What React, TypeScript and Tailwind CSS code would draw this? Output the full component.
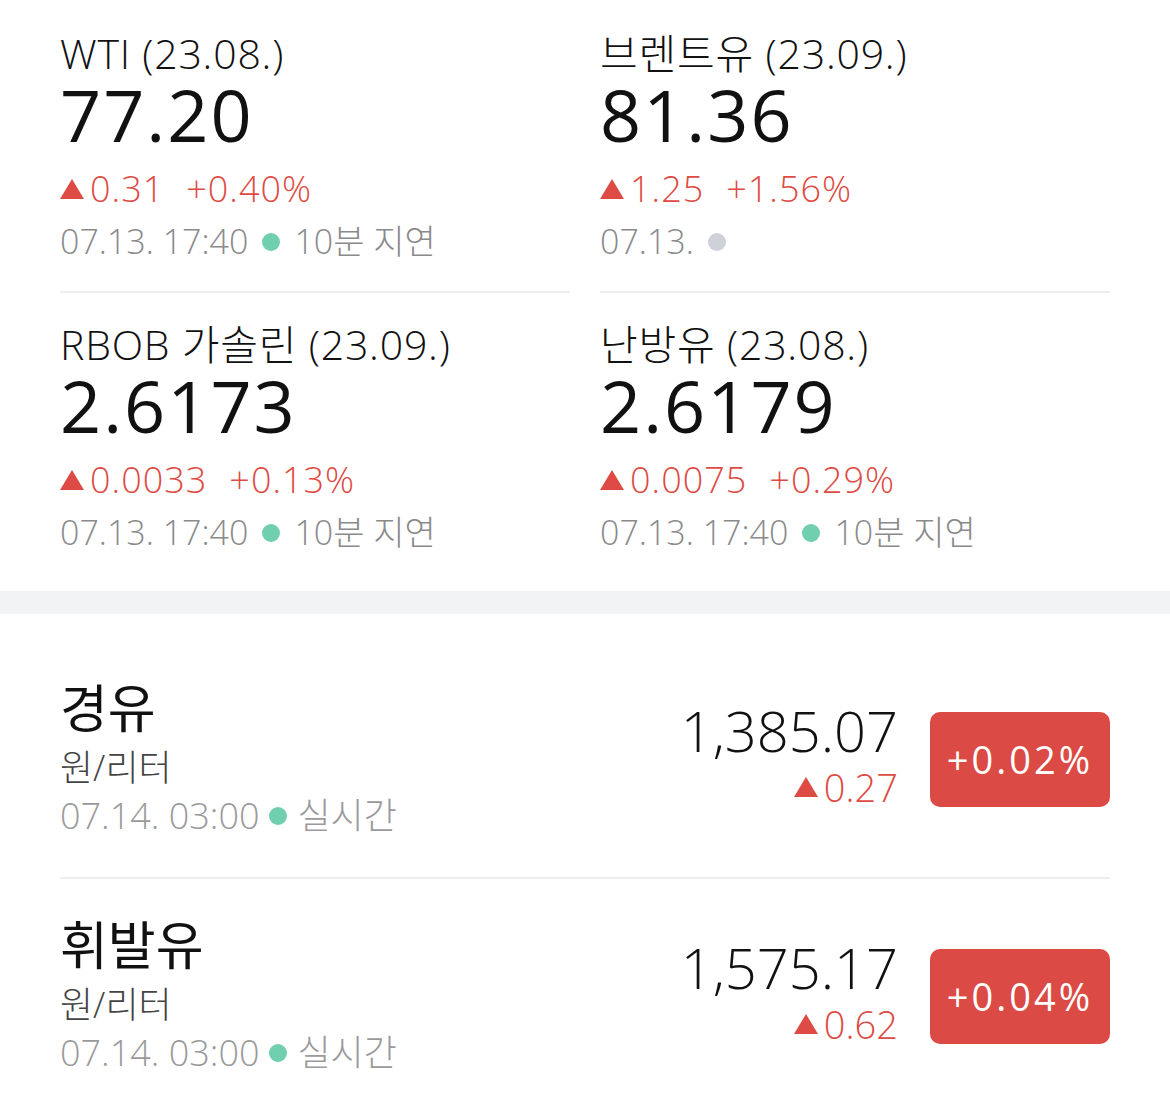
import type { ReactNode } from 'react';

type Quote = {
  name: string;
  price: string;
  diff: string;
  rate: string;
  date: string;
  status?: string;
};

const futures: Quote[] = [
  { name: 'WTI (23.08.)', price: '77.20', diff: '0.31', rate: '+0.40%', date: '07.13. 17:40', status: '10분 지연' },
  { name: '브렌트유 (23.09.)', price: '81.36', diff: '1.25', rate: '+1.56%', date: '07.13.' },
  { name: 'RBOB 가솔린 (23.09.)', price: '2.6173', diff: '0.0033', rate: '+0.13%', date: '07.13. 17:40', status: '10분 지연' },
  { name: '난방유 (23.08.)', price: '2.6179', diff: '0.0075', rate: '+0.29%', date: '07.13. 17:40', status: '10분 지연' },
];

const domestic = [
  { name: '경유', unit: '원/리터', price: '1,385.07', diff: '0.27', rate: '+0.02%', date: '07.14. 03:00' },
  { name: '휘발유', unit: '원/리터', price: '1,575.17', diff: '0.62', rate: '+0.04%', date: '07.14. 03:00' },
];

const font = "font-['Open_Sans','Noto_Sans_CJK_KR',sans-serif]";

function Up({ className = '' }: { className?: string }) {
  return (
    <svg viewBox="0 0 24 20" className={`inline-block shrink-0 fill-[#de4b44] ${className}`}>
      <polygon points="12,0 24,20 0,20" />
    </svg>
  );
}

function Dot({ live }: { live: boolean }) {
  return (
    <span
      className={`inline-block h-[18px] w-[18px] shrink-0 rounded-full ${live ? 'bg-[#6fcfae]' : 'bg-[#cfd1da]'}`}
    />
  );
}

function FutureCell({ q, top }: { q: Quote; top?: boolean }) {
  return (
    <div className={`flex flex-col ${top ? 'pt-[28px] pb-[27px]' : 'border-t-2 border-[#eeeeee] pt-[26px] pb-[36px]'}`}>
      <div className="h-[50px] whitespace-nowrap text-[41px] leading-[50px] font-light tracking-[0.8px] text-[#111]">{q.name}</div>
      <div className="h-[72px] text-[72px] leading-[72px] font-normal tracking-[2px] text-[#111]">{q.price}</div>
      <div className="mt-[15px] flex h-[48px] items-center gap-[6px] whitespace-nowrap text-[36px] font-light tracking-[1px] text-[#de4b44]">
        <Up className="h-[20px] w-[24px]" />
        <span>{q.diff}</span>
        <span className="ml-[16px]">{q.rate}</span>
      </div>
      <div className="mt-[6px] flex h-[45px] items-center gap-[14px] whitespace-nowrap text-[34px] font-light text-[#8a8a8a]">
        <span>{q.date}</span>
        <Dot live={!!q.status} />
        {q.status && <span>{q.status}</span>}
      </div>
    </div>
  );
}

function Row({ children }: { children: ReactNode }) {
  return <div className="grid grid-cols-2 gap-x-[30px] px-[60px]">{children}</div>;
}

export default function App() {
  return (
    <div className={`min-h-[1114px] w-[1170px] bg-white ${font}`}>
      <Row>
        <FutureCell q={futures[0]} top />
        <FutureCell q={futures[1]} top />
      </Row>
      <Row>
        <FutureCell q={futures[2]} />
        <FutureCell q={futures[3]} />
      </Row>
      <div className="h-[23px] bg-[#f2f3f5]" />
      <div className="px-[60px] pt-[28px]">
        {domestic.map((d) => (
          <div key={d.name} className="flex items-center border-b-2 border-[#eeeeee] pt-[36px] pb-[36px]">
            <div className="flex flex-1 flex-col">
              <div className="h-[60px] text-[52px] leading-[60px] font-normal text-[#111]">{d.name}</div>
              <div className="mt-[7px] h-[46px] text-[36px] leading-[46px] font-light text-[#444]">{d.unit}</div>
              <div className="flex h-[50px] items-center gap-[10px] whitespace-nowrap text-[36px] font-light text-[#9a9a9a]">
                <span>{d.date}</span>
                <Dot live />
                <span>실시간</span>
              </div>
            </div>
            <div className="flex flex-col items-end pb-[10px]">
              <div className="h-[62px] text-[56px] leading-[62px] font-light text-[#111]">{d.price}</div>
              <div className="mt-[3px] flex h-[46px] items-center gap-[6px] text-[38px] font-light text-[#de4b44]">
                <Up className="h-[20px] w-[24px]" />
                <span>{d.diff}</span>
              </div>
            </div>
            <div className="ml-[32px] flex h-[95px] w-[180px] items-center justify-center rounded-[10px] bg-[#db4a44] text-[38px] font-medium tracking-[3px] text-white">
              {d.rate}
            </div>
          </div>
        ))}
      </div>
    </div>
  );
}
